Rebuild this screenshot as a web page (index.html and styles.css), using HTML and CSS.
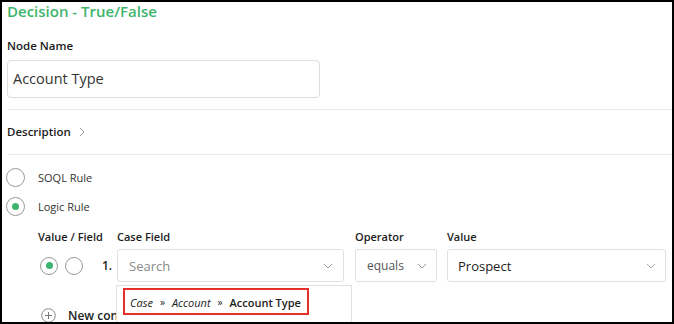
FILE: index.html
```html
<!DOCTYPE html>
<html>
<head>
<meta charset="utf-8">
<link rel="stylesheet" href="styles.css">
</head>
<body>
<div class="frame">
  <h1 class="title">Decision - True/False</h1>
  <div class="field-label node-label">Node Name</div>
  <div class="text-input">Account Type</div>
  <div class="divider"></div>
  <div class="desc-row">
    <span class="field-label">Description</span>
    <svg class="chev-right" width="6" height="10" viewBox="0 0 6 10"><path d="M1 1 L5 5 L1 9" fill="none" stroke="#999" stroke-width="1"/></svg>
  </div>
  <div class="divider"></div>
  <div class="radio-group">
    <div class="radio-row"><span class="radio"></span><span class="radio-text">SOQL Rule</span></div>
    <div class="radio-row"><span class="radio checked"></span><span class="radio-text">Logic Rule</span></div>
  </div>
  <div class="rule-grid">
    <div class="col-head">Value / Field</div>
    <div class="col-head">Case Field</div>
    <div class="col-head">Operator</div>
    <div class="col-head">Value</div>

    <div class="row-lead">
      <span class="radio small checked"></span>
      <span class="radio small"></span>
      <span class="row-num">1.</span>
    </div>
    <div class="case-cell">
      <div class="select case-select">
        <span class="placeholder">Search</span>
        <svg class="chev-down" width="10" height="6" viewBox="0 0 10 6"><path d="M1 1 L5 5 L9 1" fill="none" stroke="#999" stroke-width="1"/></svg>
      </div>
      <div class="dropdown">
        <div class="highlight"><em>Case</em><span class="sep">»</span><em>Account</em><span class="sep">»</span><strong>Account Type</strong></div>
      </div>
    </div>
    <div>
      <div class="select op-select">
        <span class="op-text">equals</span>
        <svg class="chev-down" width="10" height="6" viewBox="0 0 10 6"><path d="M1 1 L5 5 L9 1" fill="none" stroke="#999" stroke-width="1"/></svg>
      </div>
    </div>
    <div>
      <div class="select value-select">
        <span class="value-text">Prospect</span>
        <svg class="chev-down" width="10" height="6" viewBox="0 0 10 6"><path d="M1 1 L5 5 L9 1" fill="none" stroke="#aaa" stroke-width="1"/></svg>
      </div>
    </div>
  </div>
  <div class="new-row">
    <svg class="plus" width="15" height="15" viewBox="0 0 15 15"><circle cx="7.5" cy="7.5" r="6.8" fill="none" stroke="#888" stroke-width="1"/><path d="M7.5 4 V11 M4 7.5 H11" stroke="#777" stroke-width="1"/></svg>
    <span class="new-text">New condition</span>
  </div>
</div>
</body>
</html>
```

FILE: styles.css
```css
* { box-sizing: border-box; }
html, body { margin: 0; padding: 0; background: #fff; }
body { font-family: "Open Sans", "Liberation Sans", sans-serif; color: #222; }

.frame {
  width: 674px;
  height: 324px;
  border: 2px solid #000;
  padding-left: 5px;
  overflow: hidden;
  position: relative;
}

.title {
  margin: 0;
  font-size: 15px;
  font-weight: 600;
  line-height: 18px;
  color: #3db56c;
}

.field-label {
  font-size: 11.5px;
  font-weight: 600;
  line-height: 16px;
  color: #1c1c1c;
}
.node-label { margin-top: 18px; }

.text-input {
  margin-top: 6px;
  width: 313px;
  height: 38px;
  border: 1px solid #ddd;
  border-radius: 4px;
  padding-left: 5px;
  font-size: 14.5px;
  line-height: 36px;
  color: #333;
}

.divider {
  height: 1px;
  background: #e8e8e8;
  margin-top: 11px;
}
.desc-row + .divider { margin-top: 0; }

.desc-row {
  height: 44px;
  display: flex;
  align-items: center;
  gap: 8px;
  padding-bottom: 1px;
}
.chev-right { display: block; }

.radio-group { padding-top: 8px; }
.radio-row {
  height: 29px;
  display: flex;
  align-items: center;
  margin-left: -1px;
}
.radio {
  width: 19px;
  height: 19px;
  border: 1px solid #999;
  border-radius: 50%;
  display: inline-flex;
  align-items: center;
  justify-content: center;
  flex: none;
  background: #fff;
}
.radio.checked::after {
  content: "";
  width: 7px;
  height: 7px;
  border-radius: 50%;
  background: #3db56c;
}
.radio-text {
  margin-left: 13px;
  font-size: 11px;
  color: #333;
}

.rule-grid {
  margin-top: 8px;
  margin-left: 31px;
  display: grid;
  grid-template-columns: 79px 238px 92px 219px;
  row-gap: 4px;
}
.col-head {
  font-size: 11px;
  font-weight: 600;
  line-height: 16px;
  color: #1c1c1c;
}
.row-lead {
  display: flex;
  align-items: center;
  height: 33px;
  padding-left: 2px;
}
.radio.small { width: 18px; height: 18px; }
.radio.small + .radio.small { margin-left: 7px; }
.row-num {
  margin-left: 19px;
  font-size: 12px;
  font-weight: 600;
  color: #222;
}

.case-cell { position: relative; }

.select {
  height: 33px;
  border: 1px solid #e0e0e0;
  border-radius: 3px;
  display: flex;
  align-items: center;
  justify-content: space-between;
  background: #fff;
}
.case-select { width: 227px; padding: 0 10px 0 11px; }
.op-select { width: 82px; padding: 0 9px 0 11px; }
.value-select { width: 219px; padding: 0 9px 0 10px; }
.placeholder { font-size: 13px; color: #8a8a8a; }
.op-text { font-size: 12px; color: #555; }
.value-text { font-size: 13px; color: #222; }
.chev-down { display: block; }

.dropdown {
  position: absolute;
  top: 36px;
  left: -1px;
  width: 236px;
  height: 60px;
  border: 1px solid #e0e0e0;
  background: #fff;
  z-index: 2;
  padding: 2px 0 0 6px;
}
.highlight {
  display: inline-flex;
  align-items: center;
  height: 27px;
  padding: 1px 6px 0 5px;
  border: 2px solid #e8302a;
  font-size: 11px;
  color: #222;
  white-space: nowrap;
}
.highlight em { font-style: italic; }
.highlight strong { font-weight: 600; }
.sep { margin: 0 7px; font-size: 10px; }

.new-row {
  margin-top: 23px;
  margin-left: 34px;
  display: flex;
  align-items: center;
  height: 20px;
  white-space: nowrap;
}
.plus { display: block; }
.new-text {
  margin-left: 12px;
  font-size: 12px;
  font-weight: 600;
}
```
